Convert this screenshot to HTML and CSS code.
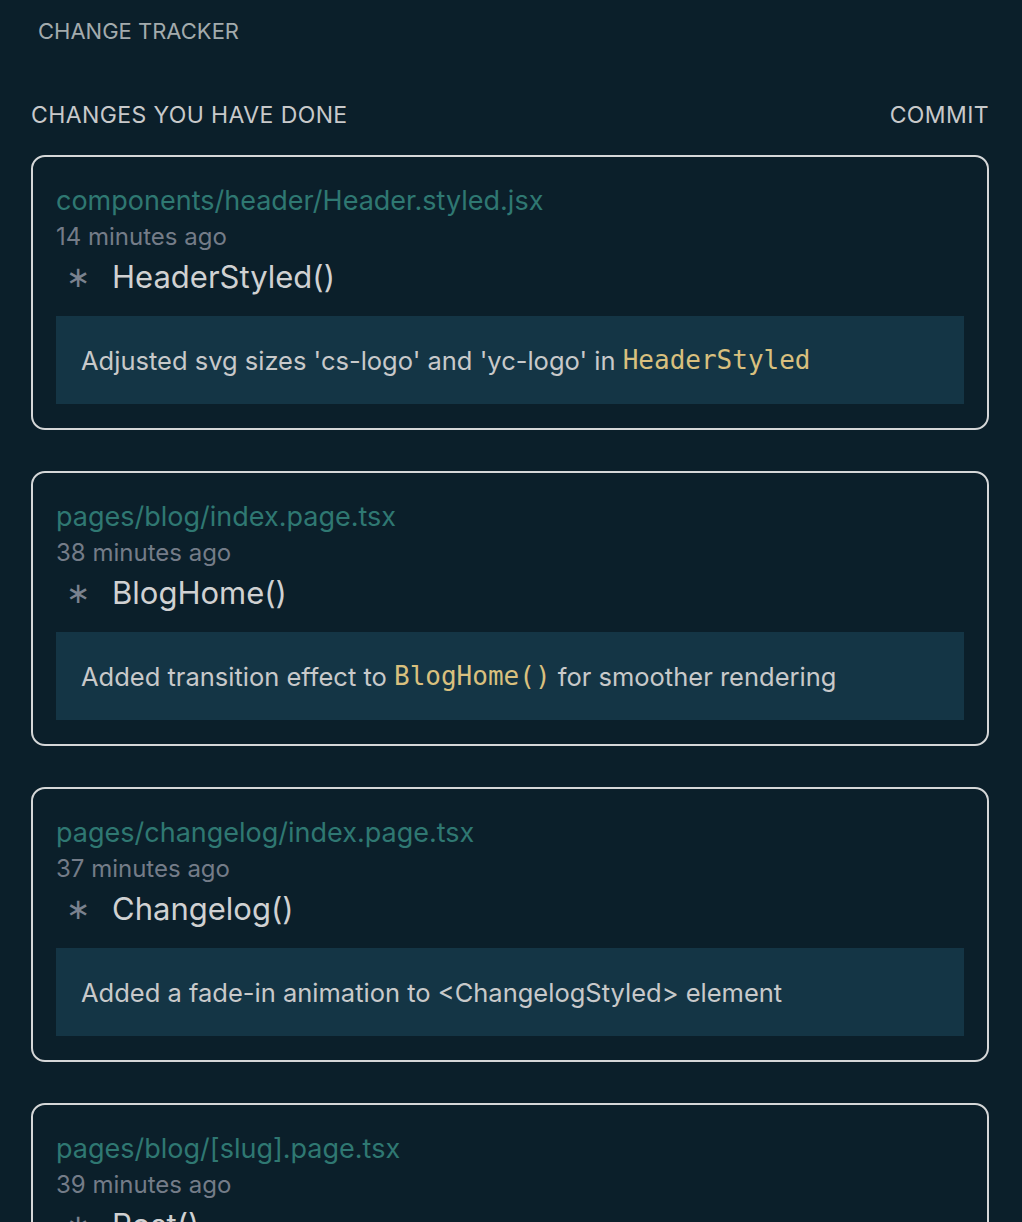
FILE: index.html
```html
<!DOCTYPE html>
<html lang="en">
<head>
<meta charset="utf-8">
<title>Change Tracker</title>
<link rel="stylesheet" href="styles.css">
</head>
<body>
<div class="page">
  <h1 class="title">CHANGE TRACKER</h1>
  <div class="bar">
    <span class="bar-label">CHANGES YOU HAVE DONE</span>
    <span class="bar-action">COMMIT</span>
  </div>
  <div class="list">
    <div class="card">
      <div class="path">components/header/Header.styled.jsx</div>
      <div class="time">14 minutes ago</div>
      <div class="fn"><span class="star">&#x2217;</span><span class="fn-name">HeaderStyled()</span></div>
      <div class="desc">Adjusted svg sizes 'cs-logo' and 'yc-logo' in <code class="code">HeaderStyled</code></div>
    </div>
    <div class="card">
      <div class="path">pages/blog/index.page.tsx</div>
      <div class="time">38 minutes ago</div>
      <div class="fn"><span class="star">&#x2217;</span><span class="fn-name">BlogHome()</span></div>
      <div class="desc">Added transition effect to <code class="code">BlogHome()</code> for smoother rendering</div>
    </div>
    <div class="card">
      <div class="path">pages/changelog/index.page.tsx</div>
      <div class="time">37 minutes ago</div>
      <div class="fn"><span class="star">&#x2217;</span><span class="fn-name">Changelog()</span></div>
      <div class="desc">Added a fade-in animation to &lt;ChangelogStyled&gt; element</div>
    </div>
    <div class="card">
      <div class="path">pages/blog/[slug].page.tsx</div>
      <div class="time">39 minutes ago</div>
      <div class="fn"><span class="star">&#x2217;</span><span class="fn-name">Post()</span></div>
      <div class="desc">Updated layout spacing in <code class="code">Post()</code></div>
    </div>
  </div>
</div>
</body>
</html>
```

FILE: styles.css
```css
html, body {
  margin: 0;
  padding: 0;
  background: #0b1f2a;
}
body {
  font-family: Inter, "Noto Sans", sans-serif;
  color: #c8c9ca;
}
.page {
  width: 958px;
  margin-left: 31px;
  padding-top: 16px;
}
.title {
  margin: 0 0 0 7px;
  font-size: 22px;
  font-weight: 400;
  line-height: 30px;
  color: #a3abad;
}
.bar {
  display: flex;
  justify-content: space-between;
  align-items: center;
  margin-top: 54px;
  height: 30px;
  font-size: 23px;
  color: #c8c9ca;
  letter-spacing: 0.4px;
}
.list {
  display: flex;
  flex-direction: column;
  gap: 41px;
  margin-top: 25px;
}
.card {
  border: 2px solid #d5d7d8;
  border-radius: 14px;
  padding: 27px 23px 24px 23px;
}
.path {
  font-size: 27px;
  line-height: 34px;
  color: #2f7872;
}
.time {
  font-size: 24px;
  line-height: 38px;
  color: #747c88;
}
.fn {
  display: flex;
  align-items: center;
  height: 40px;
  margin-bottom: 20px;
}
.star {
  width: 56px;
  padding-left: 10px;
  box-sizing: border-box;
  font-size: 29px;
  color: #7a828f;
}
.fn-name {
  font-size: 31px;
  color: #d0d1d2;
}
.desc {
  background: #143545;
  padding: 0 25px;
  height: 88px;
  display: flex;
  align-items: center;
  font-size: 25.5px;
  color: #c8c9ca;
  white-space: pre;
}
.code {
  font-family: "DejaVu Sans Mono", monospace;
  font-size: 26px;
  color: #d9c07e;
}
```
